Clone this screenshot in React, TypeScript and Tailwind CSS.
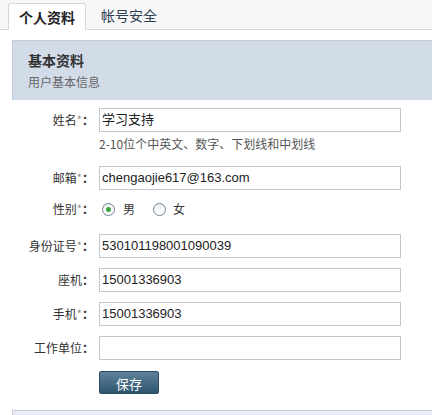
import React from "react";

const cjk = "font-['Noto_Sans_CJK_SC',sans-serif]";
const latin = "font-['Liberation_Sans','Noto_Sans_CJK_SC',sans-serif]";

function Label({ text, required }: { text: string; required?: boolean }) {
  return (
    <div className={`w-[95px] shrink-0 text-right text-[12px] text-[#333] pr-[1px] ${cjk}`}>
      {text}
      {required && <span className="text-[#888] text-[11px] relative -top-[1px]">*</span>}
      <span className="font-bold">：</span>
    </div>
  );
}

function Field({ label, value, required, mt }: { label: string; value?: string; required?: boolean; mt: string }) {
  return (
    <div className={`flex items-center h-[24px] ${mt}`}>
      <Label text={label} required={required} />
      <div
        className={`ml-[4px] w-[302px] h-[24px] border border-[#c3c6cc] bg-white pl-[2px] flex items-center text-[13px] text-[#222] ${latin}`}
      >
        {value}
      </div>
    </div>
  );
}

function Radio({ checked }: { checked?: boolean }) {
  return (
    <span className="w-[13px] h-[13px] rounded-full border border-[#6f8196] bg-gradient-to-b from-[#eef1f4] to-white flex items-center justify-center">
      {checked && <span className="w-[5px] h-[5px] rounded-full bg-[#3aa43a]" />}
    </span>
  );
}

export default function App() {
  return (
    <div className={`w-[432px] h-[415px] bg-white overflow-hidden ${cjk}`}>
      {/* tabs */}
      <div className="h-[30px] bg-[#f7f7f7] border-b border-[#d5d8dc] flex items-end pl-[8px]">
        <div className="h-[27px] w-[78px] -mb-px bg-white border border-b-0 border-[#d5d8dc] rounded-t-[3px] flex items-center justify-center text-[14px] font-bold text-[#222]">
          个人资料
        </div>
        <div className="h-[27px] ml-[15px] flex items-center text-[14px] text-[#2d3e50]">帐号安全</div>
      </div>

      {/* panel header */}
      <div className="mt-[10px] ml-[12px] h-[60px] bg-[#d2dbe8] border-t border-l border-[#c3cbd6] pl-[15px] pt-[9px]">
        <div className="text-[14px] font-bold text-[#333] leading-[20px]">基本资料</div>
        <div className="text-[12px] text-[#666] leading-[18px] mt-[3px]">用户基本信息</div>
      </div>

      {/* form */}
      <Field label="姓名" value="学习支持" required mt="mt-[8px]" />
      <div className="ml-[99px] mt-[3px] h-[18px] text-[12px] text-[#555] leading-[18px]">
        2-10位个中英文、数字、下划线和中划线
      </div>
      <Field label="邮箱" value="chengaojie617@163.com" required mt="mt-[13px]" />

      <div className="flex items-center h-[20px] mt-[9px]">
        <Label text="性别" required />
        <div className="ml-[7px] flex items-center text-[12px] text-[#333]">
          <Radio checked />
          <span className="ml-[8px]">男</span>
          <span className="ml-[18px]" />
          <Radio />
          <span className="ml-[7px]">女</span>
        </div>
      </div>

      <Field label="身份证号" value="530101198001090039" required mt="mt-[15px]" />
      <Field label="座机" value="15001336903" mt="mt-[10px]" />
      <Field label="手机" value="15001336903" required mt="mt-[10px]" />
      <Field label="工作单位" mt="mt-[10px]" />

      <div className="ml-[99px] mt-[10px]">
        <button className="w-[60px] h-[23px] rounded-[2px] bg-gradient-to-b from-[#5f8299] to-[#2e5470] text-white text-[13px] leading-[23px] border border-[#2b4b62]">
          保存
        </button>
      </div>

      <div className="mt-[16px] ml-[12px] h-[20px] bg-[#e9eef6] border-t border-l border-[#c8ccd4]" />
    </div>
  );
}
